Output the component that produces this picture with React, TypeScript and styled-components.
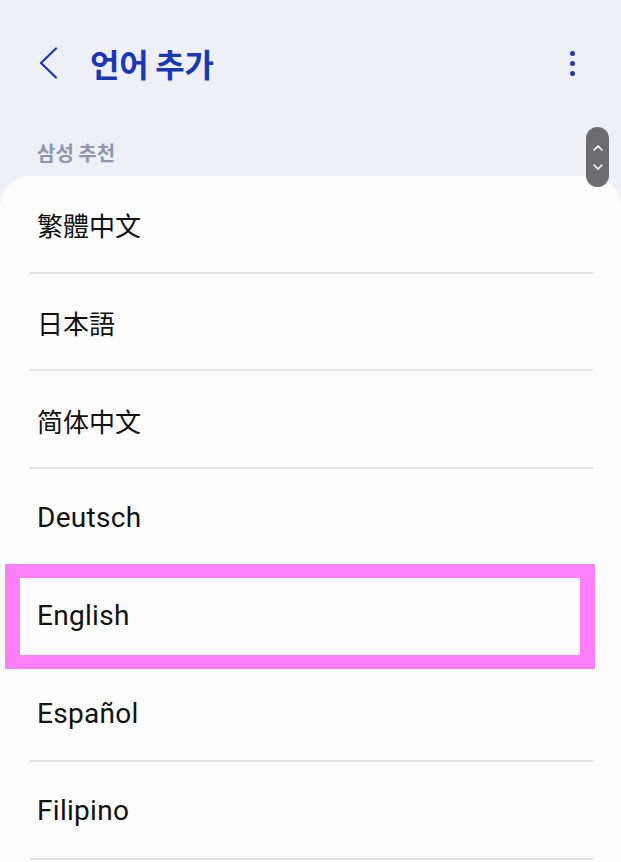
import React from "react";
import styled, { createGlobalStyle } from "styled-components";

const Global = createGlobalStyle`
  html, body { margin: 0; padding: 0; background: #eff0f5; }
  body { width: 621px; height: 862px; overflow: hidden; }
  * { box-sizing: border-box; }
`;

const Screen = styled.div`
  position: relative;
  width: 621px;
  height: 862px;
  overflow: hidden;
  background: #eff0f5;
  display: flex;
  flex-direction: column;
`;

const TopBar = styled.header`
  flex-shrink: 0;
  height: 126px;
  display: flex;
  align-items: center;
  padding: 0 46px 0 38px;
`;

const BackButton = styled.div`
  width: 22px;
  height: 32px;
  display: flex;
  align-items: center;
  margin-right: 30px;
  svg { display: block; }
`;

const Title = styled.h1`
  margin: 0;
  flex: 1;
  font-family: "Noto Sans CJK KR", "Noto Sans", sans-serif;
  font-weight: 700;
  font-size: 32px;
  color: #1a37b5;
  letter-spacing: -0.3px;
  line-height: 1;
`;

const MoreButton = styled.div`
  width: 5px;
  display: flex;
  flex-direction: column;
  gap: 5px;
`;

const Dot = styled.span`
  width: 5px;
  height: 5px;
  border-radius: 50%;
  background: #1a37b5;
`;

const SectionLabel = styled.div`
  flex-shrink: 0;
  height: 50px;
  padding: 17px 0 0 37px;
  font-family: "Noto Sans CJK KR", "Noto Sans", sans-serif;
  font-weight: 700;
  font-size: 20px;
  color: #8f95b1;
  line-height: 1;
`;

const Card = styled.div`
  flex: 1;
  min-height: 0;
  background: #fcfcfc;
  border-radius: 30px 30px 0 0;
  padding: 0 28px 0 30px;
`;

const Row = styled.div<{ $lang?: string }>`
  position: relative;
  height: 97.7px;
  border-bottom: 2px solid #e4e4e6;
  display: flex;
  align-items: center;
  padding-left: 7px;
  padding-top: 2px;
  font-family: ${(p) =>
    p.$lang === "tc"
      ? `"Noto Sans CJK TC", sans-serif`
      : p.$lang === "sc"
      ? `"Noto Sans CJK SC", sans-serif`
      : p.$lang === "jp"
      ? `"Noto Sans CJK JP", sans-serif`
      : `Roboto, "Noto Sans", sans-serif`};
  font-size: ${(p) => (p.$lang ? "26px" : "28px")};
  letter-spacing: ${(p) => (p.$lang ? "0" : "0.3px")};
  font-weight: 400;
  color: #111;
`;

const Highlight = styled.div`
  position: absolute;
  left: -25px;
  right: -2px;
  top: -3px;
  bottom: -7px;
  border: 15px solid #ff80fd;
  border-top-width: 14px;
  border-bottom-width: 14px;
  pointer-events: none;
`;

const ScrollThumb = styled.div`
  position: absolute;
  left: 586px;
  top: 127px;
  width: 23px;
  height: 60px;
  border-radius: 12px;
  background: #6d6d6f;
  display: flex;
  flex-direction: column;
  align-items: center;
  justify-content: center;
  gap: 13px;
  svg { display: block; }
`;

const items: { text: string; lang?: string; hl?: boolean }[] = [
  { text: "繁體中文", lang: "tc" },
  { text: "日本語", lang: "jp" },
  { text: "简体中文", lang: "sc" },
  { text: "Deutsch" },
  { text: "English", hl: true },
  { text: "Español" },
  { text: "Filipino" },
];

export default function App() {
  return (
    <Screen>
      <Global />
      <TopBar>
        <BackButton>
          <svg width="20" height="32" viewBox="0 0 20 32">
            <path d="M18 1.5 L3 16 L18 30.5" fill="none" stroke="#1a37b5" strokeWidth="2.2" strokeLinecap="round" strokeLinejoin="round" />
          </svg>
        </BackButton>
        <Title>언어 추가</Title>
        <MoreButton>
          <Dot />
          <Dot />
          <Dot />
        </MoreButton>
      </TopBar>
      <SectionLabel>삼성 추천</SectionLabel>
      <Card>
        {items.map((it) => (
          <Row key={it.text} $lang={it.lang}>
            {it.text}
            {it.hl && <Highlight />}
          </Row>
        ))}
      </Card>
      <ScrollThumb>
        <svg width="10" height="6" viewBox="0 0 10 6">
          <path d="M1 5 L5 1 L9 5" fill="none" stroke="#fff" strokeWidth="1.6" strokeLinecap="round" strokeLinejoin="round" />
        </svg>
        <svg width="10" height="6" viewBox="0 0 10 6">
          <path d="M1 1 L5 5 L9 1" fill="none" stroke="#fff" strokeWidth="1.6" strokeLinecap="round" strokeLinejoin="round" />
        </svg>
      </ScrollThumb>
    </Screen>
  );
}
